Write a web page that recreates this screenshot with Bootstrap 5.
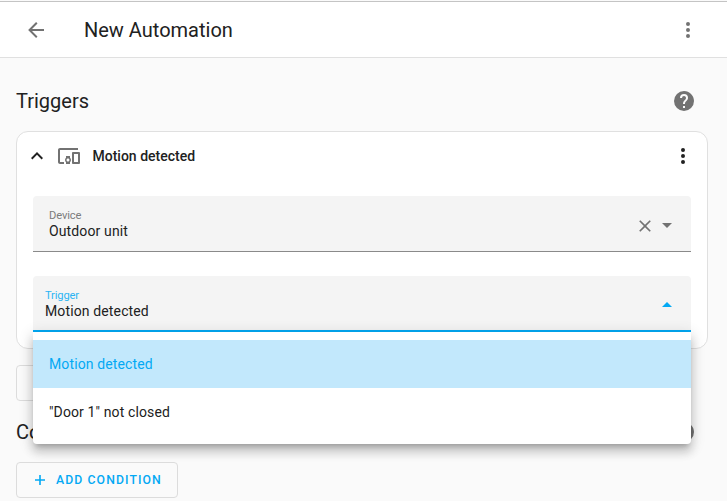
<!DOCTYPE html>
<html lang="en">
<head>
<meta charset="utf-8">
<meta name="viewport" content="width=device-width, initial-scale=1">
<title>New Automation</title>
<link href="https://cdn.jsdelivr.net/npm/bootstrap@5.3.0/dist/css/bootstrap.min.css" rel="stylesheet">
<style>
  body { font-family: Roboto, "Noto Sans", sans-serif; background: #fafafa; color: #212121; font-size: 14px; overflow: hidden; height: 501px; }
  svg { width: 24px; height: 24px; fill: currentColor; flex: none; display: block; }
  .topbar { height: 57px; margin-top: 1px; border-top: 1px solid #c4c4c4; border-bottom: 1px solid #e0e0e0; padding: 0 27px 0 24px; }
  .topbar h1 { font-size: 20px; font-weight: 400; margin-left: 36px; line-height: 24px; }
  .muted { color: #727272; }
  .section-head { height: 48px; margin: 7px 0 6px; padding-right: 15px; }
  .section-head.first { margin-top: 19px; }
  .section-head h2 { font-size: 20px; font-weight: 400; line-height: 24px; }
  .auto-card { border: 1px solid #e0e0e0; border-radius: 12px; height: 218px; margin-right: 3px; }
  .auto-head { height: 48px; padding: 0 12px 0 8px; }
  .auto-head .name { font-weight: 500; margin-left: 11.5px; line-height: 20px; }
  .field { height: 56px; background: #f4f4f4; border-radius: 4px 4px 0 0; border-bottom: 1px solid #8a8a8a; padding: 11px 12px 0 16px; }
  .field .cap { font-size: 11.2px; line-height: 16px; padding-top: 1px; margin-bottom: -1px; letter-spacing: -.15px; color: #7c7c7c; }
  .field .val { line-height: 16px; letter-spacing: .13px; }
  .field.open { border-bottom: 2px solid #03a9f4; padding-left: 12px; }
  .field.open .cap { color: #2cb4f3; }
  .field.open svg { color: #03a9f4; }
  .field .tools { height: 36px; }
  .field.open .tools { height: 34px; }
  .field .clear { width: 20px; height: 20px; margin-top: 2px; }
  .options { top: 56px; left: 0; right: 0; height: 112px; padding: 8px 0; background: #fff; border-radius: 0 0 4px 4px; z-index: 5;
    box-shadow: 0 5px 5px -3px rgba(0,0,0,.2), 0 8px 10px 1px rgba(0,0,0,.14), 0 3px 14px 2px rgba(0,0,0,.12); }
  .options li { height: 48px; padding: 0 16px; letter-spacing: .12px; }
  .options li.chosen { background: #c2e8fc; color: #03a9f4; }
  .btn-add { height: 36px; border: 1px solid #dcdcdc; border-radius: 4px; color: #03a9f4; font-size: 12.25px; font-weight: 500; letter-spacing: 1.09px; padding: 0 15px; line-height: 34px; }
  .btn-add svg { width: 16px; height: 16px; margin-right: 8px; }
</style>
</head>
<body>
<svg class="d-none" xmlns="http://www.w3.org/2000/svg">
  <symbol id="dots" viewBox="0 0 24 24"><path d="M12,16A2,2 0 0,1 14,18A2,2 0 0,1 12,20A2,2 0 0,1 10,18A2,2 0 0,1 12,16M12,10A2,2 0 0,1 14,12A2,2 0 0,1 12,14A2,2 0 0,1 10,12A2,2 0 0,1 12,10M12,4A2,2 0 0,1 14,6A2,2 0 0,1 12,8A2,2 0 0,1 10,6A2,2 0 0,1 12,4Z"/></symbol>
  <symbol id="help" viewBox="0 0 24 24"><path d="M15.07,11.25L14.17,12.17C13.45,12.89 13,13.5 13,15H11V14.5C11,13.39 11.45,12.39 12.17,11.67L13.41,10.41C13.78,10.05 14,9.55 14,9C14,7.89 13.1,7 12,7A2,2 0 0,0 10,9H8A4,4 0 0,1 12,5A4,4 0 0,1 16,9C16,9.88 15.64,10.67 15.07,11.25M13,19H11V17H13M12,2A10,10 0 0,0 2,12A10,10 0 0,0 12,22A10,10 0 0,0 22,12C22,6.47 17.5,2 12,2Z"/></symbol>
  <symbol id="plus" viewBox="0 0 24 24"><path d="M19.5,13.2H13.2V19.5H10.8V13.2H4.5V10.8H10.8V4.5H13.2V10.8H19.5V13.2Z"/></symbol>
</svg>
<header class="topbar bg-white d-flex align-items-center">
  <svg class="muted" viewBox="0 0 24 24"><path d="M20,11V13H8L13.5,18.5L12.08,19.92L4.16,12L12.08,4.08L13.5,5.5L8,11H20Z"/></svg>
  <h1 class="mb-0 flex-grow-1">New Automation</h1>
  <svg class="muted"><use href="#dots"/></svg>
</header>
<main class="px-3">
  <div class="section-head first d-flex align-items-center justify-content-between">
    <h2 class="mb-0">Triggers</h2>
    <svg class="muted"><use href="#help"/></svg>
  </div>
  <section class="auto-card bg-white">
    <div class="auto-head d-flex align-items-center">
      <svg viewBox="0 0 24 24"><path d="M7.41,15.41L12,10.83L16.59,15.41L18,14L12,8L6,14L7.41,15.41Z"/></svg>
      <svg class="muted ms-2" viewBox="0 0 24 24"><path d="M3 6H21V4H3C1.9 4 1 4.9 1 6V18C1 19.1 1.9 20 3 20H7V18H3V6M13 12H9V13.78C8.39 14.33 8 15.11 8 16C8 16.89 8.39 17.67 9 18.22V20H13V18.22C13.61 17.67 14 16.88 14 16S13.61 14.33 13 13.78V12M11 17.5C10.17 17.5 9.5 16.83 9.5 16S10.17 14.5 11 14.5 12.5 15.17 12.5 16 11.83 17.5 11 17.5M22 8H16C15.5 8 15 8.5 15 9V19C15 19.5 15.5 20 16 20H22C22.5 20 23 19.5 23 19V9C23 8.5 22.5 8 22 8M21 18H17V10H21V18Z"/></svg>
      <span class="name flex-grow-1">Motion detected</span>
      <svg><use href="#dots"/></svg>
    </div>
    <div class="p-3 d-flex flex-column gap-4">
      <div class="field d-flex justify-content-between">
        <div><div class="cap">Device</div><div class="val">Outdoor unit</div></div>
        <div class="tools muted d-flex align-items-center">
          <svg class="clear" viewBox="0 0 24 24"><path d="M19,6.41L17.59,5L12,10.59L6.41,5L5,6.41L10.59,12L5,17.59L6.41,19L12,13.41L17.59,19L19,17.59L13.41,12L19,6.41Z"/></svg>
          <svg viewBox="0 0 24 24"><path d="M7,10L12,15L17,10H7Z"/></svg>
        </div>
      </div>
      <div class="position-relative">
        <div class="field open d-flex justify-content-between">
          <div><div class="cap">Trigger</div><div class="val">Motion detected</div></div>
          <div class="tools d-flex align-items-center"><svg viewBox="0 0 24 24"><path d="M7,15L12,10L17,15H7Z"/></svg></div>
        </div>
        <ul class="options position-absolute list-unstyled mb-0">
          <li class="chosen d-flex align-items-center">Motion detected</li>
          <li class="d-flex align-items-center">"Door 1" not closed</li>
        </ul>
      </div>
    </div>
  </section>
  <button class="btn btn-add d-flex align-items-center mt-3"><svg><use href="#plus"/></svg>ADD TRIGGER</button>
  <div class="section-head d-flex align-items-center justify-content-between">
    <h2 class="mb-0">Conditions</h2>
    <svg class="muted"><use href="#help"/></svg>
  </div>
  <button class="btn btn-add d-flex align-items-center"><svg><use href="#plus"/></svg>ADD CONDITION</button>
</main>
<script src="https://cdn.jsdelivr.net/npm/bootstrap@5.3.0/dist/js/bootstrap.bundle.min.js"></script>
</body>
</html>
